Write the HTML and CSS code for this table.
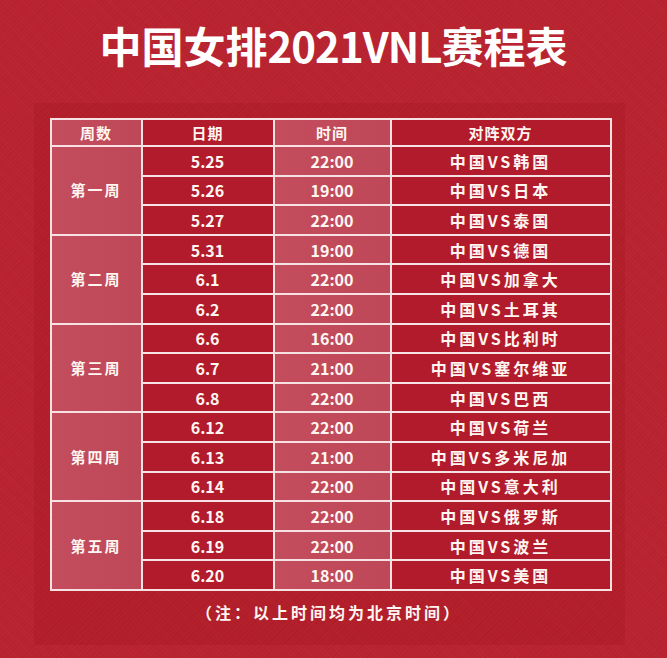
FILE: index.html
```html
<!DOCTYPE html>
<html lang="zh-CN">
<head>
<meta charset="utf-8">
<title>中国女排2021VNL赛程表</title>
<link rel="stylesheet" href="styles.css">
</head>
<body>
<div class="page">
  <h1 class="title">中国女排<span class="latin">2021VNL</span>赛程表</h1>
  <div class="panel">
    <table class="schedule">
      <colgroup>
        <col class="c-week"><col class="c-date"><col class="c-time"><col class="c-match">
      </colgroup>
      <thead>
        <tr><th class="light">周数</th><th class="dark">日期</th><th class="light">时间</th><th class="dark">对阵双方</th></tr>
      </thead>
      <tbody>
        <tr><td class="light week" rowspan="3">第一周</td><td class="dark">5.25</td><td class="light">22:00</td><td class="dark match">中国VS韩国</td></tr>
        <tr><td class="dark">5.26</td><td class="light">19:00</td><td class="dark match">中国VS日本</td></tr>
        <tr><td class="dark">5.27</td><td class="light">22:00</td><td class="dark match">中国VS泰国</td></tr>
        <tr><td class="light week" rowspan="3">第二周</td><td class="dark">5.31</td><td class="light">19:00</td><td class="dark match">中国VS德国</td></tr>
        <tr><td class="dark">6.1</td><td class="light">22:00</td><td class="dark match">中国VS加拿大</td></tr>
        <tr><td class="dark">6.2</td><td class="light">22:00</td><td class="dark match">中国VS土耳其</td></tr>
        <tr><td class="light week" rowspan="3">第三周</td><td class="dark">6.6</td><td class="light">16:00</td><td class="dark match">中国VS比利时</td></tr>
        <tr><td class="dark">6.7</td><td class="light">21:00</td><td class="dark match">中国VS塞尔维亚</td></tr>
        <tr><td class="dark">6.8</td><td class="light">22:00</td><td class="dark match">中国VS巴西</td></tr>
        <tr><td class="light week" rowspan="3">第四周</td><td class="dark">6.12</td><td class="light">22:00</td><td class="dark match">中国VS荷兰</td></tr>
        <tr><td class="dark">6.13</td><td class="light">21:00</td><td class="dark match">中国VS多米尼加</td></tr>
        <tr><td class="dark">6.14</td><td class="light">22:00</td><td class="dark match">中国VS意大利</td></tr>
        <tr><td class="light week" rowspan="3">第五周</td><td class="dark">6.18</td><td class="light">22:00</td><td class="dark match">中国VS俄罗斯</td></tr>
        <tr><td class="dark">6.19</td><td class="light">22:00</td><td class="dark match">中国VS波兰</td></tr>
        <tr><td class="dark">6.20</td><td class="light">18:00</td><td class="dark match">中国VS美国</td></tr>
      </tbody>
    </table>
    <p class="note">（注：以上时间均为北京时间）</p>
  </div>
</div>
</body>
</html>
```
FILE: styles.css
```css
html, body {
  margin: 0;
  padding: 0;
}
body {
  width: 667px;
  height: 658px;
  overflow: hidden;
  background-color: #b9232f;
  background-image:
    repeating-linear-gradient(45deg, rgba(255,255,255,0.025) 0 1px, transparent 1px 3px),
    repeating-linear-gradient(-45deg, rgba(0,0,0,0.03) 0 1px, transparent 1px 4px);
  font-family: "Noto Sans CJK SC", "Noto Sans", sans-serif;
  color: #fff6f2;
}
.page {
  display: flex;
  flex-direction: column;
  align-items: center;
  padding-top: 20px;
}
.title {
  margin: 0;
  font-size: 42px;
  line-height: 50px;
  font-weight: 700;
  color: #ffffff;
  letter-spacing: 0;
}
.title .latin {
  letter-spacing: -1px;
}
.panel {
  margin-top: 33px;
  margin-left: -9px;
  width: 591px;
  height: 542px;
  box-sizing: border-box;
  padding: 15px 16px 0 16px;
  background: rgba(150, 10, 24, 0.18);
}
.schedule {
  width: 560px;
  table-layout: fixed;
  border-collapse: collapse;
  border: 2px solid #f6e2e2;
}
.c-week { width: 91px; }
.c-date { width: 132px; }
.c-time { width: 117px; }
.c-match { width: 220px; }
.schedule th,
.schedule td {
  border: 2px solid #f6e2e2;
  padding: 0;
  text-align: center;
  vertical-align: middle;
  font-size: 15px;
  font-weight: 700;
  line-height: 20px;
}
.schedule th {
  height: 25px;
  letter-spacing: 1px;
}
.schedule td {
  height: 27.6px;
  font-size: 16px;
}
.light {
  background: #c2495a;
  background-image: linear-gradient(90deg, rgba(255,255,255,0.02), rgba(0,0,0,0.02));
}
.dark {
  background: #b21b2b;
}
.schedule td.week {
  font-size: 15px;
  letter-spacing: 2px;
}
.schedule td.match {
  letter-spacing: 3px;
}
.note {
  margin: 11px 0 0;
  text-align: center;
  font-size: 16px;
  font-weight: 700;
  letter-spacing: 3px;
  line-height: 20px;
}
```
